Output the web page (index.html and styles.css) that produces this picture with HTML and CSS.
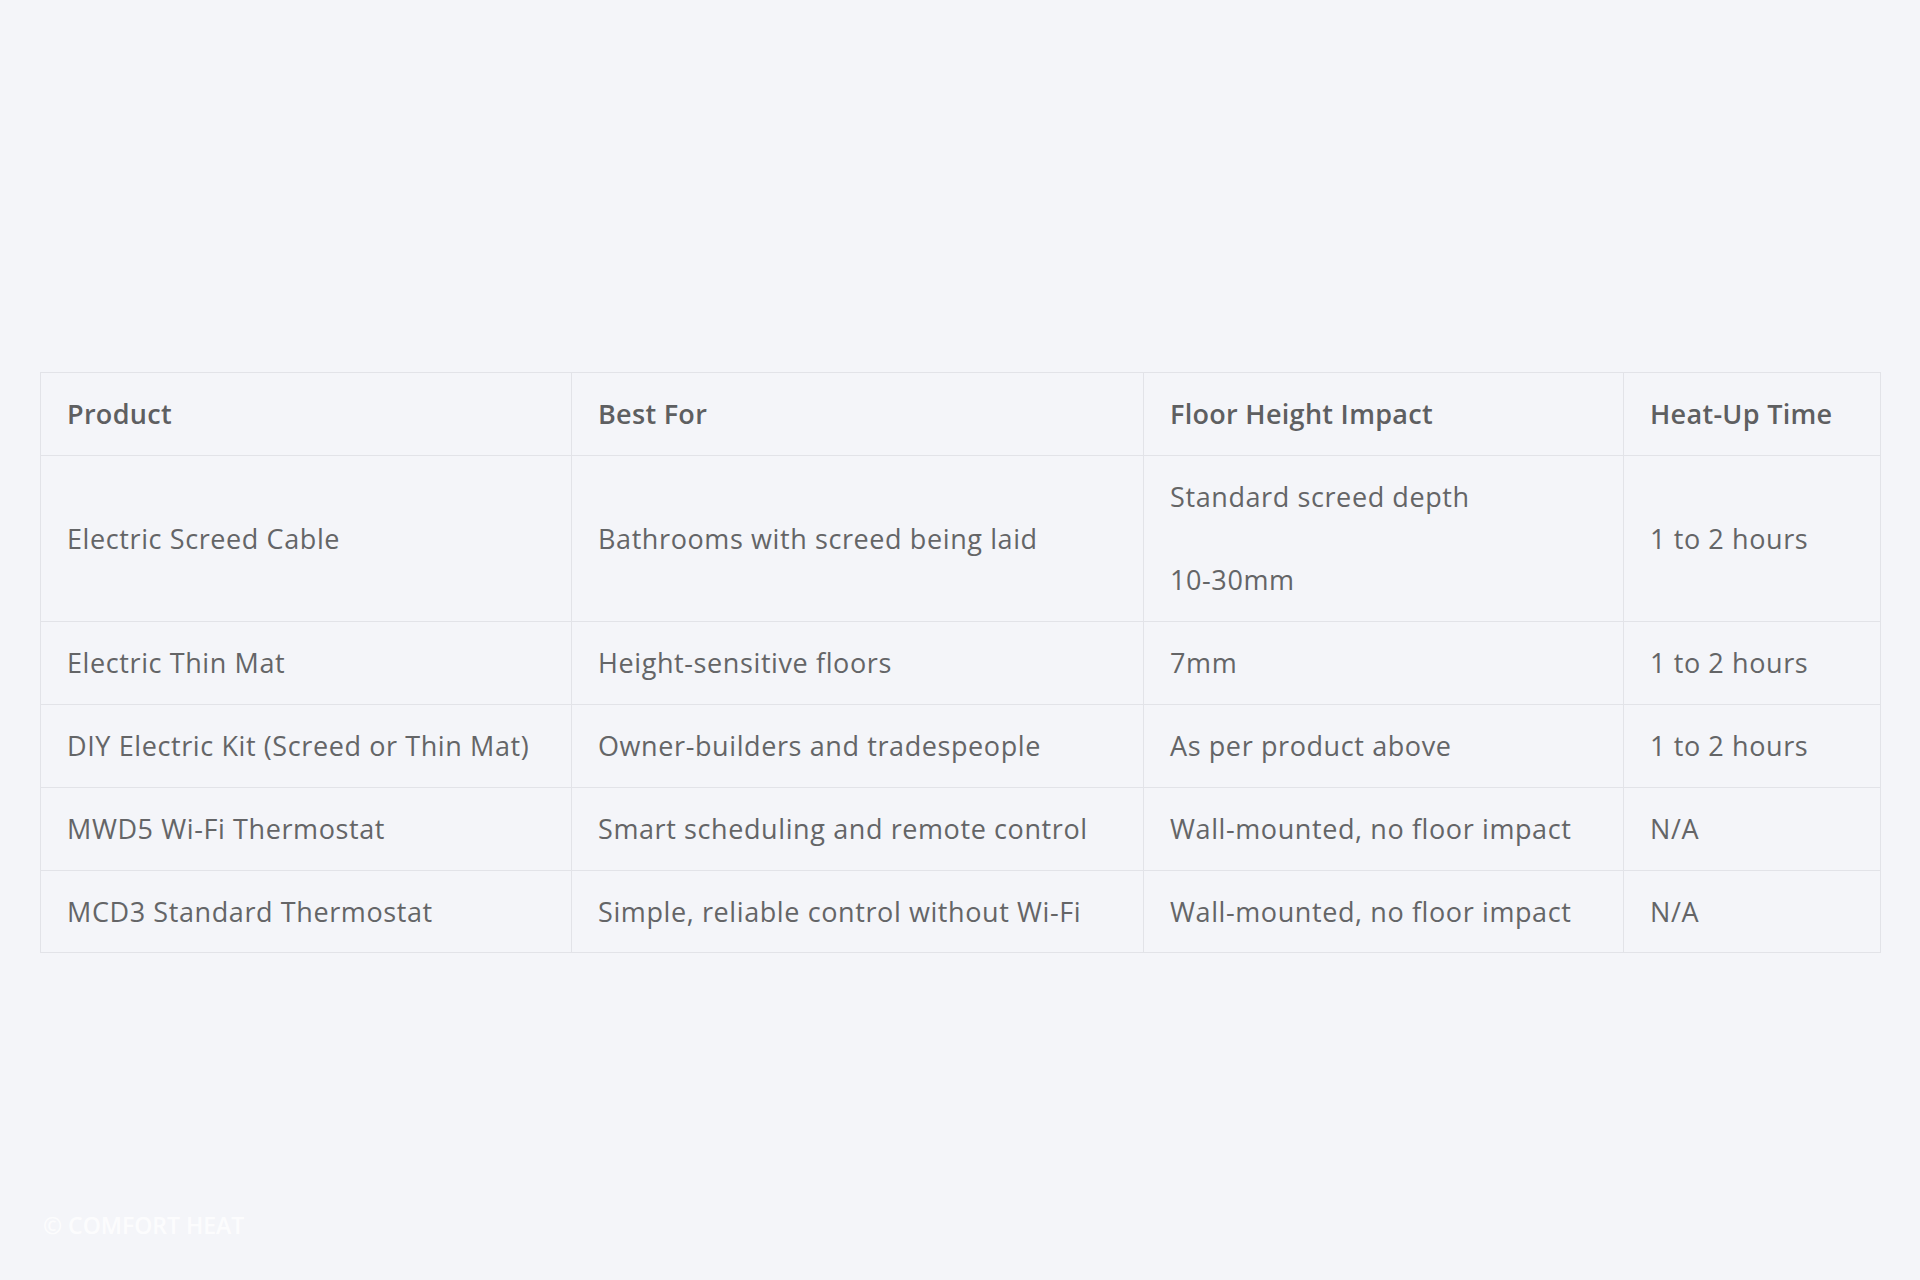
FILE: index.html
```html
<!DOCTYPE html>
<html lang="en">
  <head>
    <meta charset="UTF-8" />
    <meta name="viewport" content="width=device-width, initial-scale=1.0" />
    <title>Product Comparison</title>
    <link rel="stylesheet" href="styles.css">
  </head>
  <body>
    <div class="page">
      <div class="table-wrap">
        <table class="compare-table">
          <colgroup>
            <col class="col-product">
            <col class="col-best">
            <col class="col-height">
            <col class="col-time">
          </colgroup>
          <thead>
            <tr>
              <th>Product</th>
              <th>Best For</th>
              <th>Floor Height Impact</th>
              <th>Heat-Up Time</th>
            </tr>
          </thead>
          <tbody>
            <tr>
              <td>Electric Screed Cable</td>
              <td>Bathrooms with screed being laid</td>
              <td>Standard screed depth<br><br>10-30mm</td>
              <td>1 to 2 hours</td>
            </tr>
            <tr>
              <td>Electric Thin Mat</td>
              <td>Height-sensitive floors</td>
              <td>7mm</td>
              <td>1 to 2 hours</td>
            </tr>
            <tr>
              <td>DIY Electric Kit (Screed or Thin Mat)</td>
              <td>Owner-builders and tradespeople</td>
              <td>As per product above</td>
              <td>1 to 2 hours</td>
            </tr>
            <tr>
              <td>MWD5 Wi-Fi Thermostat</td>
              <td>Smart scheduling and remote control</td>
              <td>Wall-mounted, no floor impact</td>
              <td>N/A</td>
            </tr>
            <tr>
              <td>MCD3 Standard Thermostat</td>
              <td>Simple, reliable control without Wi-Fi</td>
              <td>Wall-mounted, no floor impact</td>
              <td>N/A</td>
            </tr>
          </tbody>
        </table>
      </div>
      <p class="watermark">&copy; COMFORT HEAT</p>
    </div>
  </body>
</html>
```

FILE: styles.css
```css
body {
  margin: 0;
  background-color: #f4f5f9;
  font-family: "Open Sans", "Liberation Sans", sans-serif;
  color: #646567;
}

.page {
  display: flex;
  flex-direction: column;
  height: 1280px;
  box-sizing: border-box;
  padding: 372px 40px 40px;
}

.compare-table {
  width: 1840px;
  border-collapse: collapse;
  table-layout: fixed;
  font-size: 27px;
  line-height: 41.8px;
}

.col-product { width: 531px; }
.col-best { width: 572px; }
.col-height { width: 480px; }
.col-time { width: 257px; }

.compare-table th,
.compare-table td {
  border: 1px solid #e2e3e8;
  padding: 20px 26px;
  text-align: left;
  vertical-align: middle;
}

.compare-table th {
  font-weight: 600;
  letter-spacing: 0.3px;
  color: #5e5f61;
}

.compare-table td {
  font-weight: 400;
  letter-spacing: 0.6px;
}

.watermark {
  margin: auto 0 0 3px;
  font-size: 23px;
  line-height: 30px;
  font-weight: 600;
  color: rgba(255, 255, 255, 0.8);
}
```
